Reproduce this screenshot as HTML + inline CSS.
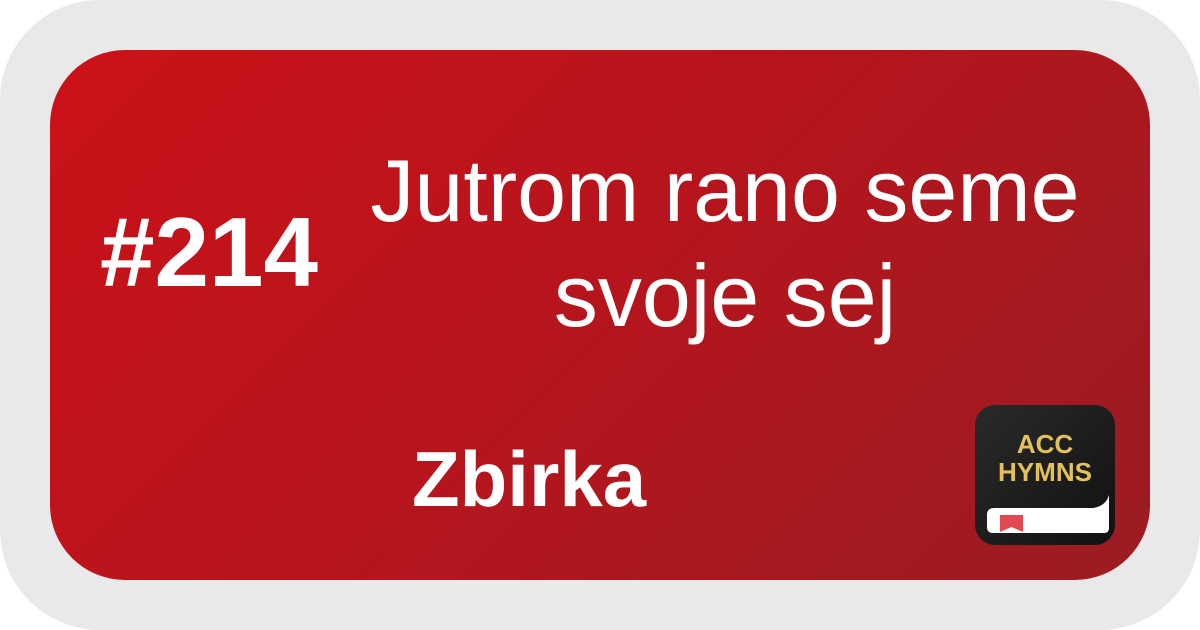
<!DOCTYPE html>
<html><head><style>
html,body{margin:0;padding:0;width:1200px;height:630px;background:#fff;overflow:hidden;font-family:"Liberation Sans",sans-serif}
.outer{position:absolute;left:0;top:0;width:1200px;height:630px;background:#e9e9e9;border-radius:100px}
.inner{position:absolute;left:50px;top:50px;width:1100px;height:530px;border-radius:75px;background:linear-gradient(135deg,#cc1118 0%,#b5151d 50%,#9a1c22 100%)}
.t{position:absolute;color:#fff;white-space:nowrap}
.num{left:100px;top:202px;font-size:98px;font-weight:bold;line-height:100px}
.title{left:325px;width:800px;text-align:center;top:138px;font-size:88px;line-height:105px}
.zb{left:412px;top:439px;font-size:78px;font-weight:bold;line-height:80px}
.logo{position:absolute;left:975px;top:405px;width:140px;height:140px;border-radius:20px;background:linear-gradient(135deg,#2a2a2a,#111)}
.lt{position:absolute;left:0;width:140px;text-align:center;color:#e2c05c;font-weight:bold;font-size:26px;line-height:28px;top:25px}
</style></head><body>
<div class="outer"></div>
<div class="inner"></div>
<div class="t num">#214</div>
<div class="t title">Jutrom rano seme<br>svoje sej</div>
<div class="t zb">Zbirka</div>
<div class="logo">
<div class="lt">ACC<br>HYMNS</div>
<svg style="position:absolute;left:0;top:0" width="140" height="140" viewBox="0 0 140 140">
<path d="M12 110 Q12 103 19 103 L118 103 Q131 101 134 90 L134 123 Q134 128 129 128 L18 128 Q12 128 12 122 Z" fill="#fff"/>
<path d="M25 110 L48 110 L48 127 L36.5 122 L25 127 Z" fill="#e04a50"/>
</svg>
</div>
</body></html>
